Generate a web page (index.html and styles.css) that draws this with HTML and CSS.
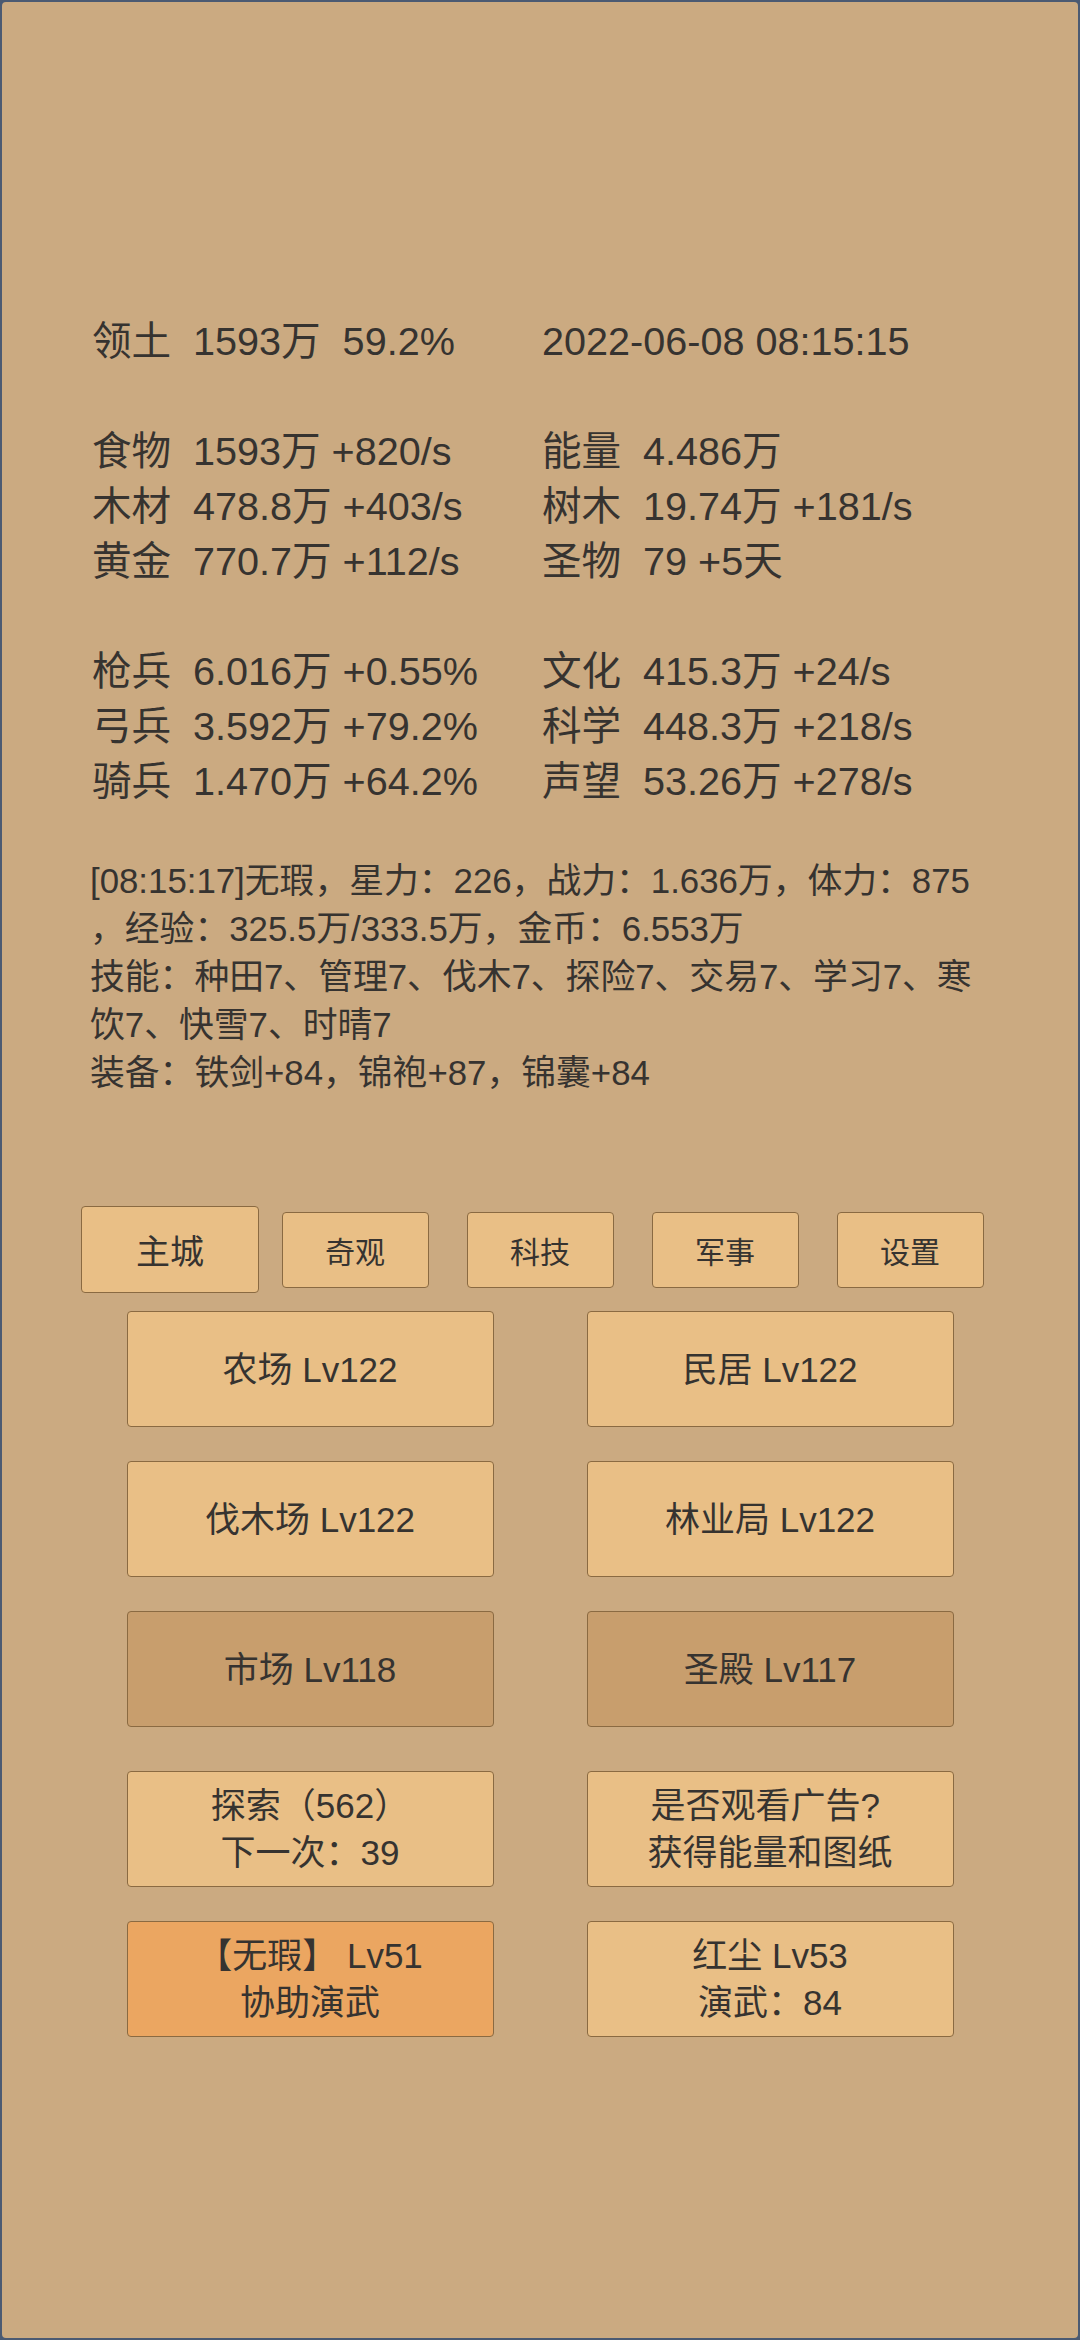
FILE: index.html
```html
<!DOCTYPE html>
<html lang="zh-CN">
<head>
    <meta charset="UTF-8">
    <title>主城</title>
    <link rel="stylesheet" href="styles.css">
</head>
<body>

<div class="frame">

    <div class="stats">
        <div class="row">
            <div class="cell"><span class="key">领土</span><span class="val">1593万  59.2%</span></div>
            <div class="cell"><span class="val">2022-06-08 08:15:15</span></div>
        </div>
        <div class="row"></div>
        <div class="row">
            <div class="cell"><span class="key">食物</span><span class="val">1593万 +820/s</span></div>
            <div class="cell"><span class="key">能量</span><span class="val">4.486万</span></div>
        </div>
        <div class="row">
            <div class="cell"><span class="key">木材</span><span class="val">478.8万 +403/s</span></div>
            <div class="cell"><span class="key">树木</span><span class="val">19.74万 +181/s</span></div>
        </div>
        <div class="row">
            <div class="cell"><span class="key">黄金</span><span class="val">770.7万 +112/s</span></div>
            <div class="cell"><span class="key">圣物</span><span class="val">79 +5天</span></div>
        </div>
        <div class="row"></div>
        <div class="row">
            <div class="cell"><span class="key">枪兵</span><span class="val">6.016万 +0.55%</span></div>
            <div class="cell"><span class="key">文化</span><span class="val">415.3万 +24/s</span></div>
        </div>
        <div class="row">
            <div class="cell"><span class="key">弓兵</span><span class="val">3.592万 +79.2%</span></div>
            <div class="cell"><span class="key">科学</span><span class="val">448.3万 +218/s</span></div>
        </div>
        <div class="row">
            <div class="cell"><span class="key">骑兵</span><span class="val">1.470万 +64.2%</span></div>
            <div class="cell"><span class="key">声望</span><span class="val">53.26万 +278/s</span></div>
        </div>
    </div>

    <div class="log">
        [08:15:17]无瑕，星力：226，战力：1.636万，体力：875<br>
        ，经验：325.5万/333.5万，金币：6.553万<br>
        技能：种田7、管理7、伐木7、探险7、交易7、学习7、寒<br>
        饮7、快雪7、时晴7<br>
        装备：铁剑+84，锦袍+87，锦囊+84
    </div>

    <div class="tabs">
        <button class="tab active">主城</button>
        <button class="tab">奇观</button>
        <button class="tab">科技</button>
        <button class="tab">军事</button>
        <button class="tab">设置</button>
    </div>

    <div class="grid">
        <button class="btn">农场 Lv122</button>
        <button class="btn">民居 Lv122</button>
        <button class="btn">伐木场 Lv122</button>
        <button class="btn">林业局 Lv122</button>
        <button class="btn dim">市场 Lv118</button>
        <button class="btn dim">圣殿 Lv117</button>
    </div>

    <div class="grid actions">
        <button class="btn">探索（562）<br>下一次：39</button>
        <button class="btn">是否观看广告? <br>获得能量和图纸</button>
        <button class="btn hot">【无瑕】 Lv51<br>协助演武</button>
        <button class="btn">红尘 Lv53<br>演武：84</button>
    </div>

</div>

</body>
</html>
```

FILE: styles.css
```css
html {
    background: #4b5a72;
}
body {
    margin: 0;
    font-family: "Liberation Sans", "Noto Sans CJK SC", sans-serif;
    color: #363330;
}
.frame {
    height: 2340px;
    box-sizing: border-box;
    border: 2px solid #4b5a72;
    border-radius: 6px;
    background: #cbaa81;
    padding-top: 312px;
}
.stats {
    padding-left: 90px;
    font-size: 39.6px;
}
.row {
    display: flex;
    height: 55px;
    line-height: 55px;
}
.cell {
    width: 450px;
    display: flex;
    white-space: pre;
}
.key {
    width: 80px;
    margin-right: 21px;
}
.log {
    margin-top: 48px;
    padding-left: 88px;
    font-size: 34.8px;
    line-height: 48px;
    white-space: nowrap;
}
.tabs {
    margin-top: 109px;
    height: 87px;
    display: flex;
    align-items: center;
    justify-content: center;
    gap: 38px;
}
button {
    font-family: inherit;
    color: inherit;
    background: #e9bf86;
    border: 1px solid #8a6a42;
    border-radius: 4px;
    padding: 0;
    cursor: pointer;
}
.tab {
    width: 147px;
    height: 76px;
    font-size: 30px;
}
.tab.active {
    width: 178px;
    height: 87px;
    margin: 0 -15.5px;
    font-size: 34px;
}
.grid {
    margin-top: 18px;
    display: grid;
    grid-template-columns: 367px 367px;
    justify-content: center;
    column-gap: 93px;
    row-gap: 34px;
}
.btn {
    height: 116px;
    font-size: 35px;
    line-height: 47px;
    white-space: pre;
}
.btn.dim {
    background: #c89e6d;
}
.btn.hot {
    background: #eba661;
}
.actions {
    margin-top: 44px;
}
```
